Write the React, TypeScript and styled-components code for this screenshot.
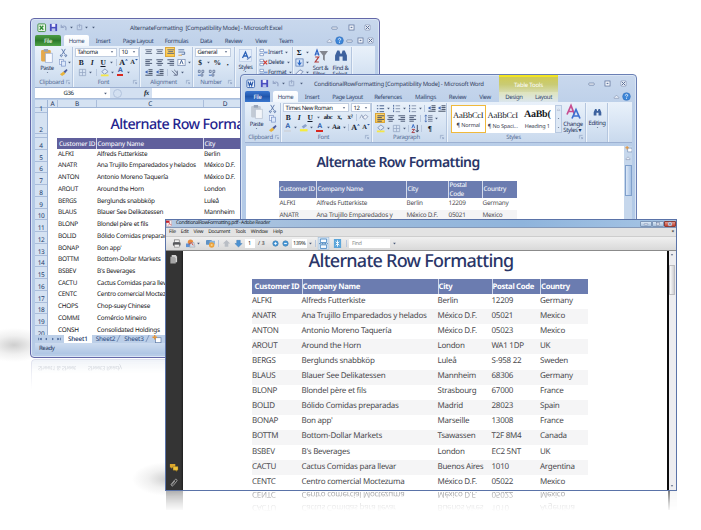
import React from "react";
import styled, { createGlobalStyle, css } from "styled-components";

const Global = createGlobalStyle`
  * { box-sizing: border-box; }
  body { margin: 0; background: #fff; text-rendering: geometricPrecision; }
  svg { display: block; flex: none; overflow: visible; }
`;

/* ---------- data ---------- */

type Customer = [string, string, string, string, string];

const customers: Customer[] = [
  ["ALFKI", "Alfreds Futterkiste", "Berlin", "12209", "Germany"],
  ["ANATR", "Ana Trujillo Emparedados y helados", "México D.F.", "05021", "Mexico"],
  ["ANTON", "Antonio Moreno Taquería", "México D.F.", "05023", "Mexico"],
  ["AROUT", "Around the Horn", "London", "WA1 1DP", "UK"],
  ["BERGS", "Berglunds snabbköp", "Luleå", "S-958 22", "Sweden"],
  ["BLAUS", "Blauer See Delikatessen", "Mannheim", "68306", "Germany"],
  ["BLONP", "Blondel père et fils", "Strasbourg", "67000", "France"],
  ["BOLID", "Bólido Comidas preparadas", "Madrid", "28023", "Spain"],
  ["BONAP", "Bon app'", "Marseille", "13008", "France"],
  ["BOTTM", "Bottom-Dollar Markets", "Tsawassen", "T2F 8M4", "Canada"],
  ["BSBEV", "B's Beverages", "London", "EC2 5NT", "UK"],
  ["CACTU", "Cactus Comidas para llevar", "Buenos Aires", "1010", "Argentina"],
  ["CENTC", "Centro comercial Moctezuma", "México D.F.", "05022", "Mexico"],
];

const sheetRows: [string, string, string][] = [
  ...customers.map((c): [string, string, string] => [c[0], c[1], c[2]]),
  ["CHOPS", "Chop-suey Chinese", "Bern"],
  ["COMMI", "Comércio Mineiro", "São Paulo"],
  ["CONSH", "Consolidated Holdings", "London"],
];

/* ---------- icons ---------- */

type IconName =
  | "save" | "undo" | "redo" | "excel" | "word" | "cut" | "copy" | "brush" | "paste" | "pasteGray"
  | "lines" | "linesCenter" | "linesRight" | "valignTop" | "wrap" | "indent" | "merge" | "orient" | "grid"
  | "bucket" | "styles" | "cells" | "deleteCells" | "sort" | "binoculars" | "eraser" | "fill" | "bullets"
  | "numbers" | "spacing" | "az" | "changeStyles" | "decimals" | "min" | "max" | "close" | "help" | "up"
  | "caret" | "launcher" | "pdf" | "printer" | "mail" | "globe" | "arrowUp" | "arrowDown" | "plus" | "minus"
  | "fitPage" | "fitWidth" | "page" | "chat" | "clip" | "highlight" | "newSheet" | "clearFormat"
  | "navFirst" | "navPrev" | "navNext" | "navLast" | "tinyUp" | "tinyDown";

const hlines = (xs: [number, number][], c = "#3c4a66") =>
  xs.map(([a, b], i) => <path key={i} d={`M${a} ${2 + i * 2}H${b}`} stroke={c} strokeWidth="1" />);

const drawings: Record<IconName, React.ReactNode> = {
  save: <><rect x="1" y="1" width="8" height="8" fill="#4a4fc0" /><rect x="3" y="1" width="4" height="3.300" fill="#eef" /><rect x="3" y="6" width="4" height="3" fill="#bcc4ea" /></>,
  undo: <path d="M2.500 2v3h3M2.800 4.800C5 2 9 3.500 7.500 8" fill="none" stroke="#96a7c8" strokeWidth="1.300" />,
  redo: <path d="M2.500 2.500h5v5h-5z M5 1v4" fill="none" stroke="#9cacca" strokeWidth="1.100" />,
  excel: <><rect x="1" y="1" width="8.500" height="8.500" rx="1" fill="#e9f5e6" stroke="#3d8e3e" /><path d="M3 3l4 4.500M7 3L3 7.500" stroke="#2f8a35" strokeWidth="1.500" /></>,
  word: <><rect x="1" y="1" width="8.500" height="8.500" rx="1" fill="#e8f0fb" stroke="#3a65b0" /><path d="M2.500 3l1.200 4.500L5 4l1.300 3.500L7.800 3" fill="none" stroke="#2857a8" strokeWidth="1.200" /></>,
  cut: <path d="M3 1l3.500 6M7 1L3.500 7M2.500 7.500a1 1 0 1 0 .1 0M7.500 7.500a1 1 0 1 0 .1 0" fill="none" stroke="#5874a8" strokeWidth="1" />,
  copy: <><rect x="1.500" y="1.500" width="4.500" height="5.500" fill="#eef3fc" stroke="#8098c8" strokeWidth=".7" /><rect x="4" y="3.500" width="4.500" height="5.500" fill="#dce8fa" stroke="#6f8bc4" strokeWidth=".7" /></>,
  brush: <><path d="M5 4l3.500-3 1 1.500L6.500 6z" fill="#4c5a9a" /><path d="M1 7l4-3 2 2.500L3.500 9z" fill="#e8b43c" /></>,
  paste: <><rect x="0" y="1" width="9" height="10.500" rx="1" fill="#e5a94c" /><rect x="2.500" y="0" width="4" height="2.500" fill="#98a4b8" /><path d="M4 4h6.500v8.500H4z" fill="#f8faff" stroke="#8aa2cc" strokeWidth=".6" /></>,
  pasteGray: <><rect x="0" y="1" width="9" height="10.500" rx="1" fill="#c2cad5" /><rect x="2.500" y="0" width="4" height="2.500" fill="#98a4b8" /><path d="M4 4h6.500v8.500H4z" fill="#f3f6fa" stroke="#b0bccb" strokeWidth=".6" /></>,
  lines: hlines([[1.5, 9], [1.5, 6.5], [1.5, 9], [1.5, 6.5]]),
  linesCenter: hlines([[1.5, 9], [2.8, 7.5], [1.5, 9], [2.8, 7.5]]),
  linesRight: hlines([[1.5, 9], [4, 9], [1.5, 9], [4, 9]]),
  valignTop: hlines([[1.5, 9], [2.5, 8], [1.5, 9]], "#59667f"),
  wrap: <><path d="M1.500 2H8M1.500 4.500H8.500V7H5" fill="none" stroke="#54719f" /><path d="M1.500 8h4" stroke="#d89b42" /></>,
  indent: <><path d="M5 2h4.500M5 4h4.500M5 6h4.500M1.500 8h8" stroke="#303c54" /><path d="M4 2.500v4L1 4.500z" fill="#3c63b5" /></>,
  merge: <><rect x="1" y="1.500" width="8" height="7" fill="#fff" stroke="#7288b0" strokeWidth=".8" /><path d="M3.200 7l1.800-4.500L6.800 7" fill="none" stroke="#35578e" /></>,
  orient: <path d="M1 3l5 5M3.500 2l4 4M7 3v5H3" fill="none" stroke="#5d6a86" />,
  grid: <path d="M1.500 1.500h7v7h-7zM5 1.500v7M1.500 5h7" fill="none" stroke="#93a4c2" strokeWidth=".8" />,
  bucket: <><path d="M2 4l3.500-3L9 4 5 7z" fill="#dfe9f7" stroke="#59719e" strokeWidth=".7" /><rect x="1" y="7.200" width="8.500" height="2" fill="#f4e64a" /></>,
  styles: <><rect x=".5" y=".5" width="12" height="12" fill="#e4eefb" stroke="#b9cbe6" strokeWidth=".7" /><path d="M3.500 9L6.500 3l2.500 6M4.700 7h3.500" fill="none" stroke="#2b62b8" strokeWidth="1.300" /><path d="M8 10.500l4-3" stroke="#6788c0" strokeWidth="1.400" /></>,
  cells: <><path d="M1 1.500h4v2.500H1zM1 6h4v2.500H1z" fill="#fff" stroke="#6181b8" strokeWidth=".7" /><path d="M5.500 4h4v2h-4z" fill="#7ea0da" /></>,
  deleteCells: <><path d="M1 1.500h4v2.500H1zM1 6h4v2.500H1z" fill="#fff" stroke="#6181b8" strokeWidth=".7" /><path d="M5 3l4 4M9 3L5 7" stroke="#d3392e" strokeWidth="1.300" /></>,
  sort: <><path d="M1 6L3 .5 5 6M1.700 4.500h2.600" fill="none" stroke="#2c62c4" strokeWidth="1.200" /><path d="M1.200 7.500h3.500L1.200 12.500h3.700" fill="none" stroke="#b23a3a" strokeWidth="1.200" /><path d="M5.500 1.500h8.500L10.800 6v5.500L9 10V6z" fill="#83868e" /></>,
  binoculars: <path d="M1 11V6L3 1.500h2l1 3h1l1-3h2L12 6v5H8V7H5v4z" fill="#3e629e" />,
  eraser: <path d="M1 6.500L5.500 2 9 4 4.500 8.500z" fill="#e9eef8" stroke="#6a7fa8" strokeWidth=".9" />,
  fill: <><rect x="1" y="1" width="8" height="8" fill="#d5e4f9" stroke="#5273ae" strokeWidth=".8" /><path d="M5 2.500v4M3 5l2 2.500L7 5" stroke="#2a67c5" strokeWidth="1.300" fill="none" /></>,
  bullets: <path d="M4 2h5M4 5.200h5M4 8.500h5M1 2h1.500M1 5.200h1.500M1 8.500h1.500" stroke="#4a628f" strokeWidth="1.100" />,
  numbers: <><path d="M4 2h5M4 5.200h5M4 8.500h5" stroke="#8492ac" /><path d="M1.800 1v8" stroke="#38568f" strokeDasharray="2 1" /></>,
  spacing: <><path d="M4.500 2h5M4.500 4h5M4.500 6h5M4.500 8h5" stroke="#66748f" /><path d="M2 1v8M.8 2.500L2 1l1.200 1.500M.8 7.500L2 9l1.200-1.500" stroke="#3d64b0" strokeWidth=".8" fill="none" /></>,
  az: <><path d="M1 4.500L2.500 .5 4 4.500" fill="none" stroke="#2c62c4" /><path d="M1 6h3L1 9.500h3.200" fill="none" stroke="#a8323a" /><path d="M7 1v7.500M5.500 7L7 9l1.500-2" fill="none" stroke="#333f5c" /></>,
  changeStyles: <><path d="M0 9L4 0l3.500 9M1.500 6h4.500" fill="none" stroke="#c74d90" strokeWidth="1.700" /><path d="M5 13L9 4l4 9M6.500 10.500h5" fill="none" stroke="#3d6fd0" strokeWidth="1.700" /></>,
  decimals: <><path d="M1.500 2.500h2v2.500h-2zM5.500 2.500h2v2.500h-2zM4.500 6.500h2V9h-2z" fill="none" stroke="#54668c" strokeWidth=".8" /><path d="M1 8h3" stroke="#3a68bc" /></>,
  min: <rect x="2" y="4.500" width="6" height="2.300" rx=".6" fill="#f6f9fd" stroke="#65799f" strokeWidth=".8" />,
  max: <><rect x="2.200" y="2.200" width="5.600" height="5.600" fill="#f6f9fd" stroke="#65799f" strokeWidth=".9" /><rect x="4" y="4.200" width="2" height="1.500" fill="#65799f" /></>,
  close: <><rect x="2" y="2" width="6" height="6" rx="1" fill="#e9eff8" stroke="#8796b5" strokeWidth=".7" /><path d="M3 3l4 4M7 3L3 7" stroke="#5a6d95" strokeWidth="1.100" /></>,
  help: <><circle cx="5" cy="5" r="4.300" fill="#3d86d8" stroke="#2b65b0" strokeWidth=".5" /><path d="M3.700 4c0-2 2.800-1.700 2.600-.2C6.200 4.700 5 4.700 5 6M5 6.900v.9" fill="none" stroke="#fff" strokeWidth=".9" /></>,
  up: <path d="M2.500 6L5 3.500 7.500 6v1h-5z" fill="#e8eef8" stroke="#8492ae" strokeWidth=".7" />,
  caret: <path d="M3.500 4.200h3L5 6z" fill="#4b5b7a" />,
  launcher: <path d="M3 7V3h4M4.700 4.700L7 7M7 5v2H5" fill="none" stroke="#8498ba" strokeWidth=".7" />,
  pdf: <><rect x="1" y="1" width="7" height="8" fill="#f8eeee" stroke="#b98b8f" strokeWidth=".5" /><path d="M0 1h5v3H0z" fill="#c5222b" /><path d="M3 8c2-2 2-3 2-4 0 2 1 3 3 3" fill="none" stroke="#cb3840" strokeWidth=".8" /></>,
  printer: <><rect x="2.500" y="1" width="5.500" height="3" fill="#f4f4f4" stroke="#555" strokeWidth=".6" /><rect x="1" y="3.500" width="8.500" height="4" rx="1" fill="#56585c" /><rect x="2.500" y="6" width="5.500" height="3" fill="#eee" stroke="#666" strokeWidth=".5" /></>,
  mail: <><circle cx="5" cy="3.500" r="3" fill="#e88a3c" /><path d="M0 5h5v4H0z" fill="#5e93d4" /><path d="M5 4h4l1 5H4z" fill="#d6dde8" stroke="#8995a8" strokeWidth=".5" /><path d="M3 6l3-2 2 3" stroke="#d13f30" fill="none" /></>,
  globe: <><rect x="0" y="1" width="6.500" height="5.500" rx="1" fill="#5f92c4" /><rect x="4" y="2" width="6" height="4" fill="#8ab4dd" /><circle cx="6.300" cy="6.700" r="3" fill="#eba23c" /><circle cx="6.300" cy="6.700" r="1.200" fill="#f6d28c" /></>,
  arrowUp: <path d="M5 1l4 4H7v3.500H3V5H1z" fill="#b9bec5" />,
  arrowDown: <path d="M5 9l4-4H7V1.500H3V5H1z" fill="#4c92d2" stroke="#2d6ba8" strokeWidth=".4" />,
  plus: <><circle cx="5" cy="5" r="3" fill="#4d9bd8" stroke="#2d6ca3" strokeWidth=".6" /><path d="M3.500 5h3M5 3.500v3" stroke="#fff" strokeWidth=".9" /></>,
  minus: <><circle cx="5" cy="5" r="3" fill="#4d9bd8" stroke="#2d6ca3" strokeWidth=".6" /><path d="M3.500 5h3" stroke="#fff" /></>,
  fitPage: <><rect x="-1" y="-1.500" width="12" height="13" fill="#dbe9f6" stroke="#9cb9d6" strokeWidth=".6" /><path d="M1.500 0h7v4h-7zM1.500 6.500h7v4h-7z" fill="#f7fbff" stroke="#4788c4" /><path d="M0 5.200h10" stroke="#3b76ae" strokeDasharray="2 1" /></>,
  fitWidth: <><rect x="1" y="0" width="8" height="10" fill="#5aa5da" /><path d="M3 3l4 4M7 3L3 7M5 1.500v7" stroke="#fff" /></>,
  page: <><path d="M3 0h4.500L9 2v6H3z" fill="#d2d2d2" /><path d="M1.500 2H6l1.500 2v5.500h-6z" fill="#a5a5a5" /></>,
  chat: <><path d="M1 1h6v4H4L2.500 6.500V5H1z" fill="#dba62c" /><path d="M4.500 4H10v4H8.500v1.500L7 8H4.500z" fill="#f0c33c" stroke="#8a6713" strokeWidth=".4" /></>,
  clip: <path d="M2 7.500L6.500 2c1.500-1.500 3.300.2 2 1.700L4.500 8.500c-1 1-2.200.1-1.500-1L6.500 3.500" fill="none" stroke="#b5b5b5" strokeWidth=".9" />,
  highlight: <><path d="M3 4l4-3 2 2-4 3z" fill="#8ca3cc" /><rect x="1" y="6.800" width="8.500" height="2.500" fill="#f5ec3e" /></>,
  newSheet: <><rect x="4" y="3" width="6" height="5.500" fill="#fff" stroke="#6580ab" strokeWidth=".8" /><path d="M3 0v5M.5 2.500h5" stroke="#e5953a" strokeWidth="1.500" /></>,
  clearFormat: <path d="M1 6l2-4 2 4M4 5l3-3 3 2-3 3z" fill="#eef2fa" stroke="#8090b0" strokeWidth=".8" />,
  navFirst: <path d="M1 2h1.500v6H1zM9 2v6L3.500 5z" fill="#2f4f88" />,
  navPrev: <path d="M7 2v6L3 5z" fill="#2f4f88" />,
  navNext: <path d="M3 2v6l4-3z" fill="#2f4f88" />,
  navLast: <path d="M9 2H7.500v6H9zM1 2v6l5.500-3z" fill="#2f4f88" />,
  tinyUp: <path d="M0 5L5 0l5 5z" fill="#2c5aa8" />,
  tinyDown: <path d="M0 0h10L5 5z" fill="#2c5aa8" />,
};

const viewBoxes: Partial<Record<IconName, string>> = {
  paste: "0 0 11 13",
  pasteGray: "0 0 11 13",
  sort: "0 0 14 13",
  binoculars: "0 0 13 13",
  styles: "0 0 13 13",
  changeStyles: "0 0 13 13",
};

const Icon = ({ name, w = 9, h = w }: { name: IconName; w?: number; h?: number }) => (
  <svg width={w} height={h} viewBox={viewBoxes[name] ?? "0 0 10 10"}>{drawings[name]}</svg>
);

/* ---------- shared office chrome ---------- */

const Stage = styled.main`
  position: relative;
  width: 701px;
  height: 530px;
  overflow: hidden;
  background: #fff;
  font-family: "Noto Sans", "Open Sans", sans-serif;
  font-size: 6px;
  letter-spacing: -0.36px;
  line-height: 1;
  color: #1e3259;
  white-space: nowrap;
`;

const OfficeWindow = styled.section<{ $x: number; $y: number; $w: number; $h: number; $edge: string }>`
  position: absolute;
  left: ${p => p.$x}px;
  top: ${p => p.$y}px;
  width: ${p => p.$w}px;
  height: ${p => p.$h}px;
  display: flex;
  flex-direction: column;
  padding: 1px 4px 3px;
  border: 1px solid ${p => p.$edge};
  border-radius: 4px;
  background: linear-gradient(#c9d8ed 0, #bdd0e9 30px, #b3cae7 130px, #b6cbe7 100%);
  box-shadow: inset 0 0 0 1px #dae6f5;
`;

const OfficeTitle = styled.header`
  display: flex;
  align-items: center;
  height: 15px;
  padding-left: 1px;
  flex: none;
`;

const OfficeTitleText = styled.h2<{ $ls: number; $pad: number }>`
  margin: 0 auto 0 ${p => p.$pad}px;
  font-size: 6px;
  font-weight: 400;
  color: #33415e;
  letter-spacing: ${p => p.$ls}px;
`;

const Slot = styled.span<{ $w: number; $on?: boolean }>`
  display: flex;
  align-items: center;
  justify-content: center;
  flex: none;
  width: ${p => p.$w}px;
  height: 10px;
  ${p => p.$on && css`background: linear-gradient(#fdd775, #fbc443); box-shadow: 0 0 0 1px #d9a63c inset;`}
`;

const Tabs = styled.nav`
  display: flex;
  align-items: stretch;
  height: 11px;
  flex: none;
`;

const Tab = styled.span<{ $w: number; $kind?: "file" | "active" | "tool"; $color?: string }>`
  display: flex;
  align-items: center;
  justify-content: center;
  flex: none;
  width: ${p => p.$w}px;
  color: #33486f;
  ${p => p.$kind === "file" && css`
    margin-right: 3px;
    color: #fff;
    border-radius: 2px 2px 0 0;
    background: ${p.$color};
  `}
  ${p => p.$kind === "active" && css`
    border-radius: 2px 2px 0 0;
    background: linear-gradient(#fff, #f1f6fc);
  `}
  ${p => p.$kind === "tool" && css`background: linear-gradient(#dfe3b6, #dbe6ee);`}
`;

const Spacer = styled.span`
  flex: 1;
`;

const Ribbon = styled.div<{ $h: number }>`
  display: flex;
  flex: none;
  height: ${p => p.$h}px;
  padding: 1px 0 0 1px;
  background: linear-gradient(#e9f1fa, #dbe7f5 45%, #c9d9ed);
  border-bottom: 1px solid #9db1d2;
`;

const GroupBox = styled.div<{ $w: number }>`
  display: flex;
  flex-direction: column;
  flex: none;
  width: ${p => p.$w}px;
  border-right: 1px solid #b4c6df;
  box-shadow: 1px 0 0 #eef4fb;
`;

const GroupBody = styled.div`
  display: flex;
  flex: 1;
  min-height: 0;
  & > div { flex: none; }
`;

const GroupLabel = styled.div`
  display: flex;
  align-items: center;
  justify-content: center;
  height: 9.500px;
  padding-left: 3px;
  color: #566c96;
  letter-spacing: -0.300px;
  & > span { flex: 1; text-align: center; }
`;

const Stack = styled.div<{ $w?: number }>`
  display: flex;
  flex-direction: column;
  ${p => p.$w !== undefined && css`width: ${p.$w}px;`}
`;

const ToolRow = styled.div<{ $pad?: number }>`
  display: flex;
  align-items: center;
  height: 10.300px;
  padding-left: ${p => p.$pad ?? 0}px;
`;

const Combo = styled.span<{ $w: number }>`
  display: flex;
  align-items: center;
  justify-content: space-between;
  width: ${p => p.$w}px;
  height: 9px;
  margin-right: 2px;
  padding-left: 1.500px;
  background: #fff;
  border: 1px solid #c0cde0;
  color: #151d2e;
`;

const Glyph = styled.b<{ $size?: number; $italic?: boolean; $line?: boolean; $bar?: string }>`
  font-family: "Liberation Serif", serif;
  font-size: ${p => p.$size ?? 7.5}px;
  line-height: 7px;
  color: #141b2c;
  ${p => p.$italic && css`font-style: italic;`}
  ${p => p.$line && css`text-decoration: underline;`}
  ${p => p.$bar && css`font-family: "Liberation Sans", sans-serif; border-bottom: 2px solid ${p.$bar}; line-height: 6px; padding: 0 1px; color: #2c5aa8;`}
`;

const SizeSlot = styled.span<{ $w: number }>`
  display: flex;
  align-items: flex-start;
  justify-content: center;
  width: ${p => p.$w}px;
`;

const Divider = styled.span<{ $m?: number }>`
  width: 1px;
  height: 7px;
  margin: 0 ${p => p.$m ?? 2}px;
  background: #b7c7de;
`;

const BigTool = styled.div<{ $w: number; $top?: number }>`
  display: flex;
  flex-direction: column;
  align-items: center;
  width: ${p => p.$w}px;
  padding-top: ${p => p.$top ?? 3}px;
  line-height: 6.300px;
  & > svg { margin-bottom: 2px; }
  & > svg:last-child { margin: -1px 0 0; }
`;

const Caret = ({ w = 8 }: { w?: number }) => <Slot $w={w}><Icon name="caret" /></Slot>;

const Tool = ({ w, name, on }: { w: number; name: IconName; on?: boolean }) => (
  <Slot $w={w} $on={on}><Icon name={name} /></Slot>
);

const FontSizeTools = () => (
  <>
    <SizeSlot $w={11}><Glyph $size={8}>A</Glyph><Icon name="tinyUp" w={3} /></SizeSlot>
    <SizeSlot $w={10}><Glyph $size={6.5}>A</Glyph><Icon name="tinyDown" w={3} /></SizeSlot>
  </>
);

const Group = ({ w, label, launcher = true, children }: { w: number; label: string; launcher?: boolean; children: React.ReactNode }) => (
  <GroupBox $w={w}>
    <GroupBody>{children}</GroupBody>
    <GroupLabel><span>{label}</span>{launcher && <Icon name="launcher" w={8} />}</GroupLabel>
  </GroupBox>
);

/* ---------- spreadsheet window ---------- */

const FormulaBar = styled.div`
  display: flex;
  align-items: center;
  flex: none;
  height: 11px;
  background: #fff;
  border-bottom: 1px solid #a9bcda;
  color: #10182a;
`;

const NameBox = styled.span`
  width: 66px;
  padding-left: 1px;
  text-align: center;
`;

const FxZone = styled.span`
  display: flex;
  align-items: center;
  justify-content: space-between;
  width: 42px;
  height: 10px;
  margin-left: 1px;
  padding: 0 3px;
  background: #d3e0f1;
  font: italic 700 7px "Liberation Serif", serif;
  &::before { content: ""; width: 7px; height: 7px; border-radius: 50%; border: 1px solid #b2c3dd; }
`;

const SheetArea = styled.div`
  display: grid;
  flex: none;
  grid-template-columns: 13px 1fr;
  height: 235.500px;
  margin-top: 0.500px;
  overflow: hidden;
  background: #fff;
`;

const Gutter = styled.div`
  display: flex;
  flex-direction: column;
  background: #d5e2f2;
  border-right: 1px solid #9fb5d6;
  font-size: 6.500px;
  color: #253f70;
`;

const RowHead = styled.span<{ $h: number }>`
  display: flex;
  flex: none;
  align-items: flex-end;
  justify-content: center;
  height: ${p => p.$h}px;
  border-bottom: 1px solid #aabddb;
  line-height: 6px;
`;

const Sheet = styled.div`
  display: flex;
  flex-direction: column;
`;

const ColumnHeads = styled.div`
  display: flex;
  flex: none;
  height: 8.500px;
  background: #d5e2f2;
  border-bottom: 1px solid #9fb5d6;
`;

const ColumnHead = styled.span<{ $w: number }>`
  width: ${p => p.$w}px;
  border-right: 1px solid #aabddb;
  text-align: center;
  line-height: 8px;
  font-size: 6.500px;
`;

const SheetTitle = styled.h1`
  margin: 0;
  flex: none;
  padding-left: 62.500px;
  height: 29.500px;
  line-height: 33px;
  font-size: 14.300px;
  font-weight: 500;
  letter-spacing: -0.580px;
  color: #23238e;
`;

const SheetRow = styled.div<{ $head?: boolean }>`
  display: grid;
  grid-template-columns: 39px 107px 36px;
  align-items: center;
  flex: none;
  width: 183px;
  height: 11.740px;
  margin-left: 9px;
  font-size: 6.400px;
  letter-spacing: -0.240px;
  color: #202024;
  & > span { padding-left: 1px; }
  ${p => p.$head && css`
    height: 11px;
    margin-bottom: -0.500px;
    font-weight: 500;
    background: #605f9c;
    color: #f4f4fb;
    letter-spacing: -0.220px;
    & > span { height: 11px; line-height: 12px; }
    & > span:first-child { padding-left: 2px; }
    & > span + span { border-left: 1px solid #d9d9ea; padding-left: 0.500px; }
  `}
`;

const SheetTabs = styled.div`
  display: flex;
  align-items: center;
  flex: none;
  height: 8px;
  background: #bccfe8;
  font-size: 6.400px;
  color: #2c4a80;
`;

const Nav = styled.span`
  display: flex;
  justify-content: space-between;
  width: 29px;
  padding: 0 3px;
`;

const SheetTab = styled.span<{ $on?: boolean }>`
  padding: 0 4px;
  height: 8px;
  line-height: 8px;
  letter-spacing: -0.200px;
  ${p => (p.$on
    ? css`background: #fff; color: #14305f; font-weight: 500;`
    : css`
      &::after { content: ""; display: inline-block; width: 1px; height: 7px; margin: 0 -3px 0 3px; background: #8097be; transform: skewX(-25deg); vertical-align: top; }
    `)}
`;

const StatusBar = styled.footer`
  flex: 1;
  padding-left: 4px;
  line-height: 10px;
  background: linear-gradient(#cddcf0, #afc6e4);
`;

const excelTabs: [string, number][] = [["Insert", 28], ["Page Layout", 42], ["Formulas", 35], ["Data", 24], ["Review", 31], ["View", 24], ["Team", 26]];

const SpreadsheetWindow = () => (
  <OfficeWindow $x={30} $y={18} $w={350} $h={339.5} $edge="#6468a8">
    <OfficeTitle>
      <Tool w={11} name="excel" /><Slot $w={1} /><Tool w={10} name="save" /><Tool w={11} name="undo" /><Caret w={5} />
      <Tool w={10} name="redo" /><Caret w={5} /><Caret w={9} />
      <OfficeTitleText $pad={32} $ls={-0.25}>AlternateFormatting&nbsp; [Compatibility Mode] - Microsoft Excel</OfficeTitleText>
      <Tool w={17} name="min" /><Tool w={17} name="max" /><Tool w={15} name="close" />
    </OfficeTitle>
    <Tabs>
      <Tab $w={26} $kind="file" $color="linear-gradient(#4d9c45, #2d7a2c 50%, #50a447)">File</Tab>
      <Tab $w={25} $kind="active">Home</Tab>
      {excelTabs.map(([t, w]) => <Tab key={t} $w={w}>{t}</Tab>)}
      <Spacer />
      <Tool w={10} name="up" /><Tool w={10} name="help" /><Tool w={11} name="min" /><Tool w={10} name="max" /><Tool w={10} name="close" />
    </Tabs>
    <Ribbon $h={42}>
      <Group w={37} label="Clipboard">
        <BigTool $w={22} $top={2}><Icon name="paste" w={12} h={14} />Paste<Icon name="caret" w={7} h={5} /></BigTool>
        <Stack>
          <ToolRow><Tool w={10} name="cut" /></ToolRow>
          <ToolRow><Tool w={9} name="copy" /><Caret w={5} /></ToolRow>
          <ToolRow><Tool w={11} name="brush" /></ToolRow>
        </Stack>
      </Group>
      <Group w={67} label="Font">
        <Stack>
          <ToolRow $pad={2}><Combo $w={42}>Tahoma<Icon name="caret" w={8} /></Combo><Combo $w={20}>10<Icon name="caret" w={8} /></Combo></ToolRow>
          <ToolRow $pad={3}>
            <Slot $w={10}><Glyph>B</Glyph></Slot><Slot $w={12}><Glyph $italic>I</Glyph></Slot><Slot $w={10}><Glyph $line>U</Glyph></Slot><Caret w={7} /><Divider $m={1} />
            <FontSizeTools />
          </ToolRow>
          <ToolRow $pad={4}><Tool w={10} name="grid" /><Caret w={7} /><Divider /><Tool w={10} name="bucket" /><Caret w={6} /><Slot $w={10}><Glyph $bar="#d8281f" $size={7}>A</Glyph></Slot><Caret w={6} /></ToolRow>
        </Stack>
      </Group>
      <Group w={53} label="Alignment">
        <Stack>
          <ToolRow $pad={3}><Tool w={11} name="valignTop" /><Tool w={11} name="valignTop" /><Tool w={10} name="valignTop" on /><Tool w={13} name="wrap" /></ToolRow>
          <ToolRow $pad={3}><Tool w={11} name="lines" /><Tool w={11} name="linesCenter" /><Tool w={10} name="linesRight" /><Tool w={12} name="merge" /><Caret w={5} /></ToolRow>
          <ToolRow $pad={3}><Tool w={11} name="indent" /><Tool w={11} name="indent" /><Divider /><Tool w={10} name="orient" /><Caret w={5} /></ToolRow>
        </Stack>
      </Group>
      <Group w={42} label="Number">
        <Stack>
          <ToolRow $pad={2}><Combo $w={36}>General<Icon name="caret" w={8} /></Combo></ToolRow>
          <ToolRow $pad={2}><Slot $w={10}><Glyph>$</Glyph></Slot><Caret w={6} /><Slot $w={12}><Glyph>%</Glyph></Slot><Slot $w={9}><Glyph>,</Glyph></Slot></ToolRow>
          <ToolRow $pad={3}><Tool w={11} name="decimals" /><Tool w={11} name="decimals" /></ToolRow>
        </Stack>
      </Group>
      <Group w={22} label="" launcher={false}>
        <BigTool $w={21} $top={2}><Icon name="styles" w={13} />Styles<Icon name="caret" w={7} h={5} /></BigTool>
      </Group>
      <Group w={36} label="Cells" launcher={false}>
        <Stack>
          <ToolRow $pad={1}><Tool w={10} name="cells" />Insert<Caret /></ToolRow>
          <ToolRow $pad={1}><Tool w={10} name="deleteCells" />Delete<Caret /></ToolRow>
          <ToolRow $pad={1}><Tool w={10} name="cells" />Format<Caret /></ToolRow>
        </Stack>
      </Group>
      <Group w={59} label="Editing" launcher={false}>
        <Stack $w={18}>
          <ToolRow $pad={1}><Slot $w={10}><Glyph>Σ</Glyph></Slot><Caret w={6} /></ToolRow>
          <ToolRow $pad={1}><Tool w={10} name="fill" /><Caret w={6} /></ToolRow>
          <ToolRow $pad={1}><Tool w={10} name="eraser" /><Caret w={6} /></ToolRow>
        </Stack>
        <BigTool $w={19} $top={2}><Icon name="sort" w={14} />Sort &amp;<br />Filter</BigTool>
        <BigTool $w={21} $top={2}><Icon name="binoculars" w={14} />Find &amp;<br />Select</BigTool>
      </Group>
    </Ribbon>
    <FormulaBar><NameBox>G36</NameBox><Caret w={8} /><FxZone>fx</FxZone></FormulaBar>
    <SheetArea>
      <Gutter>
        <RowHead $h={8.5} /><RowHead $h={5}>1</RowHead><RowHead $h={21}>2</RowHead><RowHead $h={4} />
        <RowHead $h={12}>4</RowHead>
        {sheetRows.map((r, i) => <RowHead key={r[0]} $h={11.74}>{i + 5}</RowHead>)}
      </Gutter>
      <Sheet>
        <ColumnHeads><ColumnHead $w={10}>A</ColumnHead><ColumnHead $w={39}>B</ColumnHead><ColumnHead $w={107}>C</ColumnHead><ColumnHead $w={43}>D</ColumnHead></ColumnHeads>
        <SheetTitle>Alternate Row Formatting</SheetTitle>
        <SheetRow $head><span>Customer ID</span><span>Company Name</span><span>City</span></SheetRow>
        {sheetRows.map(r => <SheetRow key={r[0]}>{r.map((c, i) => <span key={i}>{c}</span>)}</SheetRow>)}
      </Sheet>
    </SheetArea>
    <SheetTabs>
      <Nav><Icon name="navFirst" w={4} /><Icon name="navPrev" w={4} /><Icon name="navNext" w={4} /><Icon name="navLast" w={4} /></Nav>
      <SheetTab $on>Sheet1</SheetTab><SheetTab>Sheet2</SheetTab><SheetTab>Sheet3</SheetTab><Tool w={16} name="newSheet" />
    </SheetTabs>
    <StatusBar>Ready</StatusBar>
  </OfficeWindow>
);

/* ---------- word processor window ---------- */

const ToolTitle = styled.span`
  position: absolute;
  left: 258px;
  top: 0;
  width: 59px;
  height: 17px;
  line-height: 16px;
  text-align: center;
  letter-spacing: -0.200px;
  color: #fff;
  border-top: 2px solid #f2e422;
  background: linear-gradient(#cfca55, #c9cb74 50%, #d6dbae);
`;

const Gallery = styled.div`
  display: flex;
  height: 28px;
  margin: 1.500px 0 0 4px;
  background: #fff;
`;

const StyleTile = styled.div<{ $on?: boolean; $bold?: boolean }>`
  display: flex;
  flex-direction: column;
  justify-content: space-around;
  align-items: center;
  width: 34.500px;
  padding: 3px 0 1px;
  overflow: hidden;
  color: #39414f;
  font-size: 5.500px;
  letter-spacing: -0.150px;
  ${p => p.$on && css`border: 1.500px solid #f0b93c;`}
  & > b {
    font: ${p => (p.$bold ? "700 10px" : "400 8.500px")} "Liberation Serif", serif;
    color: #16181d;
    letter-spacing: -0.250px;
  }
`;

const GalleryScroll = styled.div`
  display: flex;
  flex-direction: column;
  justify-content: space-around;
  width: 7px;
  background: #dde8f5;
  border: 1px solid #b8c9e1;
`;

const Document = styled.div`
  display: grid;
  grid-template-columns: 1fr 8px;
  flex: 1;
  margin: 3px 0 0 1px;
  background: #fff;
  overflow: hidden;
`;

const DocPage = styled.div`
  padding-left: 33px;
`;

const DocTitle = styled.h1`
  margin: 0;
  padding-left: 37.500px;
  height: 35px;
  line-height: 33px;
  font-size: 14px;
  font-weight: 600;
  letter-spacing: -0.600px;
  color: #2a3668;
`;

const DocRow = styled.div<{ $head?: boolean; $shade?: boolean }>`
  display: grid;
  grid-template-columns: 37px 90px 42px 34px 35px;
  align-items: center;
  width: 238px;
  height: 12px;
  padding-bottom: 1px;
  font-size: 6.400px;
  letter-spacing: -0.220px;
  color: #4c4c50;
  background: ${p => (p.$shade ? "#f4f4f5" : "#fff")};
  & > span { padding-left: 0.500px; }
  ${p => p.$head && css`
    height: 17px;
    padding: 0;
    background: #6b7cb0;
    color: #f2f4fa;
    font-weight: 500;
    line-height: 8.300px;
    align-items: stretch;
    & > span { display: flex; align-items: center; letter-spacing: -0.280px; }
    & > span + span { border-left: 1px solid #d3d9ea; }
  `}
`;

const DocScroll = styled.div`
  display: flex;
  flex-direction: column;
  align-items: center;
  gap: 1px;
  background: #c6d7ec;
  & > i {
    width: 7px;
    height: 31px;
    margin-top: 2px;
    border: 1px solid #7f9fcb;
    background: linear-gradient(90deg, #dce8f7, #a6c1e4);
  }
`;

const wordTabs: [string, number][] = [["Insert", 28], ["Page Layout", 43], ["References", 38], ["Mailings", 37], ["Review", 27], ["View", 28]];

const WordWindow = () => (
  <OfficeWindow $x={240} $y={74} $w={397} $h={160} $edge="#6a7fb4">
    <OfficeTitle>
      <Tool w={9} name="word" /><Slot $w={4} /><Tool w={10} name="save" /><Tool w={13} name="undo" /><Caret w={3} /><Tool w={13} name="redo" /><Caret w={7} />
      <OfficeTitleText $pad={9} $ls={-0.24}>ConditionalRowFormatting [Compatibility Mode] - Microsoft Word</OfficeTitleText>
      <Tool w={16} name="min" /><Tool w={16} name="max" /><Tool w={17} name="close" />
    </OfficeTitle>
    <ToolTitle>Table Tools</ToolTitle>
    <Tabs>
      <Tab $w={25} $kind="file" $color="linear-gradient(#3a76d0, #2056ac 50%, #3b78cf)">File</Tab>
      <Tab $w={25} $kind="active">Home</Tab>
      {wordTabs.map(([t, w]) => <Tab key={t} $w={w}>{t}</Tab>)}
      <Tab $w={30} $kind="tool">Design</Tab><Tab $w={29} $kind="tool">Layout</Tab>
      <Spacer />
      <Tool w={9} name="up" /><Tool w={11} name="help" />
    </Tabs>
    <Ribbon $h={41}>
      <Group w={35} label="Clipboard">
        <BigTool $w={21} $top={2}><Icon name="pasteGray" w={12} h={14} />Paste<Icon name="caret" w={7} h={5} /></BigTool>
        <Stack>
          <ToolRow><Tool w={10} name="cut" /></ToolRow><ToolRow><Tool w={10} name="copy" /></ToolRow><ToolRow><Tool w={10} name="brush" /></ToolRow>
        </Stack>
      </Group>
      <Group w={91} label="Font">
        <Stack>
          <ToolRow $pad={2}><Combo $w={66}>Times New Roman<Icon name="caret" w={8} /></Combo><Combo $w={20}>12<Icon name="caret" w={8} /></Combo></ToolRow>
          <ToolRow $pad={2}>
            <Slot $w={10}><Glyph>B</Glyph></Slot><Slot $w={12}><Glyph $italic>I</Glyph></Slot><Slot $w={10}><Glyph $line>U</Glyph></Slot><Caret w={7} />
            <Slot $w={12}><Glyph $size={6.5}>abc</Glyph></Slot><Slot $w={11}><Glyph $size={7}>x,</Glyph></Slot><Slot $w={10}><Glyph $size={7}>x²</Glyph></Slot><Divider $m={1} /><Tool w={10} name="clearFormat" />
          </ToolRow>
          <ToolRow $pad={2}>
            <Slot $w={9}><Glyph $bar="#cfd6e0" $size={7}>A</Glyph></Slot><Caret w={6} /><Tool w={10} name="highlight" /><Caret w={6} /><Slot $w={11}><Glyph $bar="#d8281f" $size={7}>A</Glyph></Slot><Caret w={6} />
            <Slot $w={10}><Glyph $size={7}>Aa</Glyph></Slot><Caret w={6} /><Divider $m={1} /><FontSizeTools />
          </ToolRow>
        </Stack>
      </Group>
      <Group w={75} label="Paragraph">
        <Stack>
          <ToolRow $pad={3}><Tool w={10} name="bullets" /><Caret w={6} /><Tool w={10} name="numbers" /><Caret w={6} /><Tool w={10} name="numbers" /><Caret w={6} /><Divider $m={1} /><Tool w={10} name="indent" /><Tool w={10} name="indent" /></ToolRow>
          <ToolRow $pad={3}><Tool w={10} name="lines" on /><Tool w={11} name="linesCenter" /><Tool w={11} name="linesRight" /><Tool w={11} name="lines" /><Divider /><Tool w={10} name="spacing" /><Caret w={6} /></ToolRow>
          <ToolRow $pad={3}><Tool w={10} name="bucket" /><Caret w={6} /><Tool w={10} name="grid" /><Caret w={6} /><Divider $m={1} /><Tool w={10} name="az" /><Divider $m={1} /><Slot $w={13}><Glyph>¶</Glyph></Slot></ToolRow>
        </Stack>
      </Group>
      <Group w={139} label="Styles">
        <Gallery>
          <StyleTile $on><b>AaBbCcI</b>¶ Normal</StyleTile>
          <StyleTile><b>AaBbCcI</b>¶ No Spaci...</StyleTile>
          <StyleTile $bold><b>AaBb(</b>Heading 1</StyleTile>
          <GalleryScroll><Icon name="up" w={5} /><Icon name="caret" w={5} /><Icon name="caret" w={5} /></GalleryScroll>
        </Gallery>
        <BigTool $w={23} $top={2}><Icon name="changeStyles" w={13} h={14} />Change<br />Styles ▾</BigTool>
      </Group>
      <Group w={22} label="" launcher={false}>
        <BigTool $w={22} $top={4}><Icon name="binoculars" w={9} h={11} />Editing<Icon name="caret" w={7} h={5} /></BigTool>
      </Group>
    </Ribbon>
    <Document>
      <DocPage>
        <DocTitle>Alternate Row Formatting</DocTitle>
        <DocRow $head><span>Customer ID</span><span>Company Name</span><span>City</span><span>Postal<br />Code</span><span>Country</span></DocRow>
        <DocRow><span>ALFKI</span><span>Alfreds Futterkiste</span><span>Berlin</span><span>12209</span><span>Germany</span></DocRow>
        <DocRow $shade><span>ANATR</span><span>Ana Trujillo Emparedados y</span><span>México D.F.</span><span>05021</span><span>Mexico</span></DocRow>
      </DocPage>
      <DocScroll><Icon name="newSheet" w={7} /><Icon name="up" w={8} /><i /></DocScroll>
    </Document>
  </OfficeWindow>
);

/* ---------- reader window ---------- */

const ReaderWindow = styled.section`
  position: absolute;
  left: 165px;
  top: 219px;
  width: 512px;
  height: 271.500px;
  display: flex;
  flex-direction: column;
  border: 1px solid #5a73a8;
  background: #fff;
`;

const ReaderTitle = styled.header`
  display: flex;
  align-items: center;
  flex: none;
  height: 8px;
  background: linear-gradient(90deg, #b4cae3, #9dbbdc 35%, #8fb4dc 70%, #a6c5e5);
  border-bottom: 1px solid #8499b9;
  font-size: 5px;
  letter-spacing: -0.370px;
  color: #151d2b;
  & > span { flex: 1; padding-left: 3px; }
`;

const CaptionButton = styled.i<{ $danger?: boolean }>`
  display: flex;
  justify-content: center;
  align-items: center;
  width: 12px;
  height: 6px;
  border: 1px solid ${p => (p.$danger ? "#8c3d36" : "#7e97b8")};
  border-radius: 0 0 1px 1px;
  background: ${p => (p.$danger ? "linear-gradient(#e29a8d, #c9402c)" : "linear-gradient(#dbe7f4, #a9c1dd)")};
`;

const ReaderMenu = styled.nav`
  display: flex;
  align-items: center;
  flex: none;
  gap: 5.200px;
  height: 8px;
  padding: 0 2px 0 3px;
  background: #e3e3e3;
  font-size: 5px;
  letter-spacing: -0.350px;
  color: #1c1c1c;
  & > b { margin-left: auto; }
`;

const ReaderTools = styled.div`
  display: flex;
  align-items: center;
  flex: none;
  height: 15px;
  padding-left: 4px;
  background: linear-gradient(#f0f0f0, #d9d9d9);
  border-top: 1px solid #cdcdcd;
  border-bottom: 1px solid #8b8b8b;
  color: #222;
  font-size: 5.500px;
`;

const Field = styled.span<{ $w: number; $dim?: boolean }>`
  width: ${p => p.$w}px;
  height: 9px;
  padding-left: ${p => (p.$w === 15 ? 1 : 3)}px;
  line-height: 9px;
  background: #fff;
  color: ${p => (p.$dim ? "#8a8a8a" : "#222")};
`;

const PageCount = styled.span`
  width: 15px;
  padding-left: 3px;
  letter-spacing: 0;
`;

const ReaderBody = styled.div`
  display: grid;
  grid-template-columns: 17px 1fr 1.500px 7.500px;
  flex: 1;
  min-height: 0;
`;

const Sidebar = styled.aside`
  display: flex;
  flex-direction: column;
  align-items: center;
  gap: 6px;
  padding: 4px 3px 3px 0;
  background: linear-gradient(90deg, #343434 88%, #1e1e1e);
  & > svg:first-child { margin-bottom: auto; }
`;

const PageEdge = styled.i`
  background: #0c0c0c;
`;

const ReaderScroll = styled.div`
  display: flex;
  flex-direction: column;
  align-items: center;
  background: #ededf0;
  & > i { width: 6px; height: 30px; margin-top: 6px; border: 1px solid #bcbcc0; background: linear-gradient(90deg, #fafafa, #cfcfd3); }
  & > svg:last-child { margin-top: auto; }
`;

const PdfPage = styled.div`
  padding-left: 69px;
  overflow: hidden;
`;

const PdfTitle = styled.h1`
  margin: 0;
  padding-left: 56.500px;
  height: 28px;
  line-height: 20px;
  font-size: 18px;
  font-weight: 500;
  letter-spacing: -0.740px;
  color: #2a3668;
`;

const PdfRow = styled.div<{ $head?: boolean; $shade?: boolean }>`
  display: grid;
  grid-template-columns: 49.500px 136px 54px 48.500px 48px;
  align-items: center;
  width: 336px;
  height: 15.100px;
  padding-bottom: 2px;
  font-size: 8px;
  letter-spacing: -0.260px;
  color: #4a4a4e;
  background: ${p => (p.$shade ? "#f5f5f6" : "#fff")};
  ${p => p.$head && css`
    padding: 0;
    background: #6b7cb0;
    color: #fff;
    font-weight: 700;
    font-size: 7.700px;
    letter-spacing: -0.300px;
    & > span { height: 15.100px; line-height: 16px; padding-left: 0; }
    & > span:first-child { padding-left: 2.500px; }
    & > span + span { border-left: 1px solid #cfd6e8; }
  `}
`;

const PdfDataRow = ({ row, shade }: { row: Customer; shade: boolean }) => (
  <PdfRow $shade={shade}>{row.map((c, i) => <span key={i}>{c}</span>)}</PdfRow>
);

const menus = ["File", "Edit", "View", "Document", "Tools", "Window", "Help"];

const Reader = () => (
  <ReaderWindow>
    <ReaderTitle>
      <Icon name="pdf" w={7} />
      <span>ConditionalRowFormatting.pdf - Adobe Reader</span>
      <CaptionButton><Icon name="min" w={6} /></CaptionButton>
      <CaptionButton><Icon name="max" w={6} /></CaptionButton>
      <CaptionButton $danger><Icon name="close" w={6} /></CaptionButton>
    </ReaderTitle>
    <ReaderMenu>{menus.map(m => <span key={m}>{m}</span>)}<b>×</b></ReaderMenu>
    <ReaderTools>
      <Tool w={12} name="printer" /><Slot $w={2} /><Tool w={12} name="mail" /><Caret w={5} /><Slot $w={3} /><Tool w={12} name="globe" />
      <Divider $m={2} /><Tool w={11} name="arrowUp" /><Tool w={12} name="arrowDown" /><Slot $w={1} />
      <Field $w={10}>1</Field><PageCount>/ 3</PageCount>
      <Tool w={10} name="plus" /><Tool w={10} name="minus" /><Slot $w={2} />
      <Field $w={15}>139%</Field><Caret w={7} /><Divider $m={1} />
      <Tool w={13} name="fitPage" /><Tool w={14} name="fitWidth" /><Divider $m={2} />
      <Field $w={41} $dim>Find</Field><Caret w={8} />
    </ReaderTools>
    <ReaderBody>
      <Sidebar><Icon name="page" w={9} /><Icon name="chat" w={9} /><Icon name="clip" w={9} /></Sidebar>
      <PdfPage>
        <PdfTitle>Alternate Row Formatting</PdfTitle>
        <PdfRow $head><span>Customer ID</span><span>Company Name</span><span>City</span><span>Postal Code</span><span>Country</span></PdfRow>
        {customers.map((c, i) => <PdfDataRow key={c[0]} row={c} shade={i % 2 === 1} />)}
      </PdfPage>
      <PageEdge />
      <ReaderScroll><Icon name="caret" w={8} /><i /><Icon name="caret" w={8} /></ReaderScroll>
    </ReaderBody>
  </ReaderWindow>
);

/* ---------- floor: shadows and reflections ---------- */

const FloorShadow = styled.div<{ $x: number; $y: number }>`
  position: absolute;
  left: ${p => p.$x}px;
  top: ${p => p.$y}px;
  width: 72px;
  height: 34px;
  background: radial-gradient(closest-side, rgba(120, 120, 120, 0.36), rgba(150, 150, 150, 0.14) 55%, transparent);
`;

const ReaderMirror = styled.div`
  position: absolute;
  left: 166px;
  top: 491px;
  width: 511px;
  height: 21px;
  display: grid;
  grid-template-columns: 17px 1fr 1.500px 7.500px;
  align-items: end;
  overflow: hidden;
  transform: scaleY(-1);
  opacity: 0.55;
  mask-image: linear-gradient(transparent, rgba(0, 0, 0, 0.3) 40%, #000);
`;

const MirrorBar = styled.i<{ $bg: string }>`
  height: 21px;
  background: ${p => p.$bg};
`;

const MirrorRows = styled.div`
  padding-left: 69px;
  margin-bottom: -2px;
  & > div { height: 12.500px; background: none; }
`;

const SheetMirror = styled.div`
  position: absolute;
  left: 31px;
  top: 359px;
  width: 134px;
  height: 30px;
  padding: 18px 0 0 6px;
  overflow: hidden;
  border-left: 1px solid #8a92c0;
  border-bottom: 1px solid #8a92c0;
  border-radius: 0 0 0 4px;
  background: linear-gradient(transparent 15px, #c4d2e6);
  color: #30415f;
  font-size: 6px;
  transform: scaleY(-1);
  filter: blur(0.5px);
  opacity: 0.28;
  mask-image: linear-gradient(transparent, #000);
`;

const MirrorText = styled.span`
  margin-right: 12px;
`;

export default function App() {
  return (
    <Stage>
      <Global />
      <FloorShadow $x={-22} $y={328} />
      <SheetMirror><MirrorText>Sheet1 &amp; Sheet</MirrorText><MirrorText>Sheet3 Ready</MirrorText></SheetMirror>
      <SpreadsheetWindow />
      <WordWindow />
      <FloorShadow $x={132} $y={462} />
      <ReaderMirror>
        <MirrorBar $bg="#777" />
        <MirrorRows><PdfDataRow row={customers[11]} shade={false} /><PdfDataRow row={customers[12]} shade={false} /></MirrorRows>
        <MirrorBar $bg="#111" /><MirrorBar $bg="#eee" />
      </ReaderMirror>
      <Reader />
    </Stage>
  );
}
